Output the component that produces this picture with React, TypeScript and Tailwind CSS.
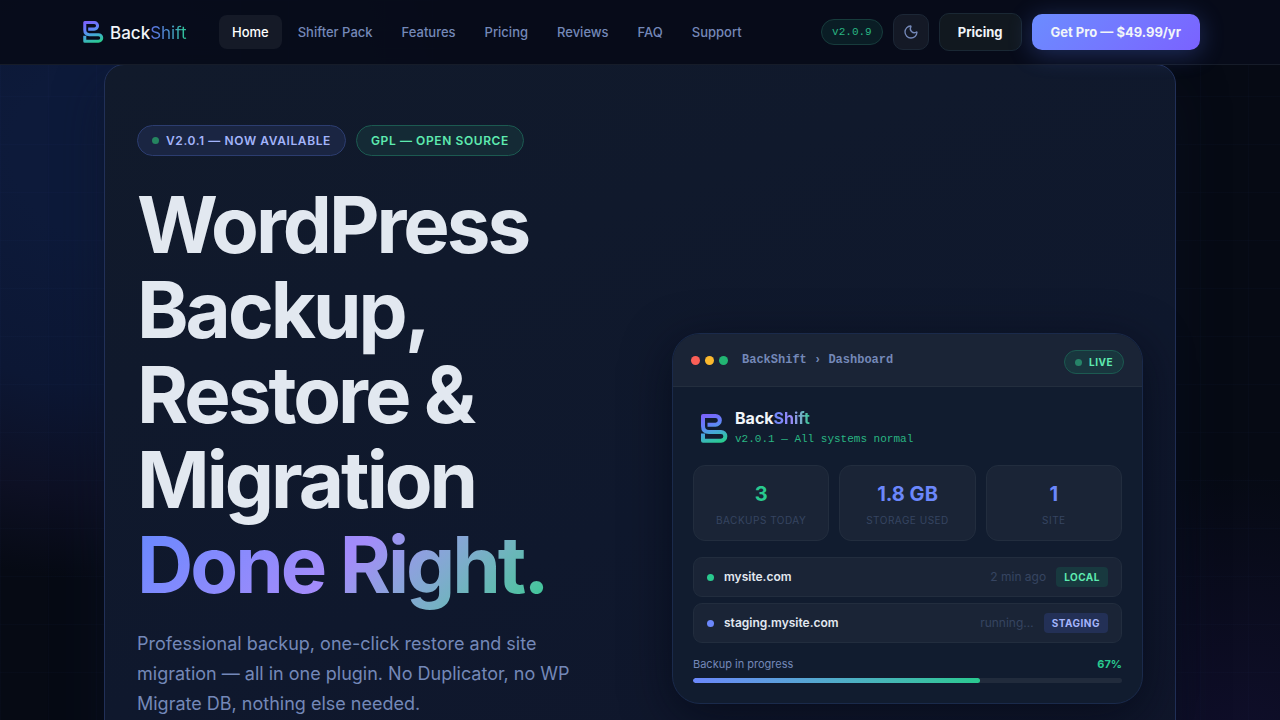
import { useId } from "react";
import { Moon } from "lucide-react";
import clsx from "clsx";

const NAV_LINKS = [
  "Home",
  "Shifter Pack",
  "Features",
  "Pricing",
  "Reviews",
  "FAQ",
  "Support",
];

const STATS = [
  { value: "3", label: "Backups today", color: "text-[#29c98f]" },
  { value: "1.8 GB", label: "Storage used", color: "text-[#6b87fb]" },
  { value: "1", label: "Site", color: "text-[#6b87fb]" },
];

const SITES = [
  {
    name: "mysite.com",
    status: "2 min ago",
    tag: "LOCAL",
    dot: "bg-[#29c98f]",
    tagStyle: "bg-[#18393f] text-[#5eeab0]",
  },
  {
    name: "staging.mysite.com",
    status: "running…",
    tag: "STAGING",
    dot: "bg-[#6b87fb]",
    tagStyle: "bg-[#233056] text-[#a3b4fb]",
  },
];

function LogoMark({ className }: { className?: string }) {
  const id = useId();

  return (
    <svg viewBox="0 0 27 29" fill="none" className={className} aria-hidden="true">
      <defs>
        <linearGradient id={id} x1="6" y1="0" x2="16" y2="29" gradientUnits="userSpaceOnUse">
          <stop stopColor="#7a62fa" />
          <stop offset="0.35" stopColor="#6580fa" />
          <stop offset="0.6" stopColor="#48a5dc" />
          <stop offset="1" stopColor="#29cb90" />
        </linearGradient>
      </defs>
      <path
        d="M6.5 10.7H14.5A4.35 4.35 0 0 0 14.5 2H2V12Q2 18 8 18H20A4.35 4.35 0 0 1 20 26.7H2V19.5"
        stroke={`url(#${id})`}
        strokeWidth="4"
        strokeLinejoin="round"
      />
    </svg>
  );
}

function Header() {
  return (
    <header className="relative z-10 border-b border-[#161c29] bg-[#070c19]/95">
      <div className="mx-auto flex h-16 max-w-[1120px] items-center">
        <a href="#" className="flex w-[139px] shrink-0 items-center gap-1.5 pl-[3px]">
          <LogoMark className="h-[22px] w-[21px]" />
          <span className="pt-[3px] text-[17px] font-medium text-slate-100">
            Back
            <span className="bg-linear-to-r from-[#5b6fe0] via-[#4c8fd0] to-[#29c98f] bg-clip-text font-normal text-transparent">
              Shift
            </span>
          </span>
        </a>
        <nav className="flex gap-[3px]">
          {NAV_LINKS.map((link, i) => (
            <a
              key={link}
              href="#"
              className={clsx(
                "rounded-lg px-[13px] py-[7px] text-[13px] leading-5 font-medium whitespace-nowrap",
                i === 0 ? "bg-[#151a27] text-white" : "text-[#7488b8]"
              )}
            >
              {link}
            </a>
          ))}
        </nav>
        <div className="ml-auto flex shrink-0 items-center gap-2.5">
          <span className="rounded-full border border-[#173c3c] bg-[#0a1d25] px-2.5 font-['Liberation_Mono',monospace] text-[11px] leading-6 text-[#29b582]">
            v2.0.9
          </span>
          <button
            type="button"
            aria-label="Toggle theme"
            className="flex size-9 items-center justify-center rounded-[10px] border border-[#1c2736] bg-[#141926] text-[#7488b8]"
          >
            <Moon className="size-4" />
          </button>
          <button
            type="button"
            className="rounded-[10px] border border-[#1a2834] bg-[#11181f] px-[18px] py-2 text-[13px] leading-5 font-bold text-slate-100"
          >
            Pricing
          </button>
          <button
            type="button"
            className="rounded-[10px] bg-linear-135 from-[#6b8cff] to-[#7a62ff] px-[19px] py-2 text-[13px] leading-5 font-bold whitespace-nowrap text-slate-100 shadow-[0_4px_24px_rgba(91,127,255,0.3)]"
          >
            Get Pro — $49.99/yr
          </button>
        </div>
      </div>
    </header>
  );
}

function Dashboard() {
  return (
    <div className="self-center overflow-hidden rounded-[28px] border border-[#1a2a4b] bg-[#111c2f] shadow-[0_12px_48px_rgba(4,6,18,0.6)]">
      <div className="flex h-[53px] items-center border-b border-[#232e3e] bg-[#1a2436] px-[18px]">
        <div className="flex gap-[5px]">
          <span className="size-[9px] rounded-full bg-[#fb5f57]" />
          <span className="size-[9px] rounded-full bg-[#fbb92e]" />
          <span className="size-[9px] rounded-full bg-[#22b573]" />
        </div>
        <span className="ml-3.5 font-['Liberation_Mono',monospace] text-xs font-bold text-[#7488b8]">
          BackShift › Dashboard
        </span>
        <span className="mt-1 ml-auto flex items-center gap-[7px] rounded-full border border-[#1c5a51] bg-[#19363e] px-2.5 text-[10px] leading-[22px] font-bold tracking-wider text-[#5eeab0]">
          <span className="size-[7px] rounded-full bg-[#268468]" />
          LIVE
        </span>
      </div>

      <div className="p-5">
        <div className="flex items-center gap-[7px] pl-2">
          <LogoMark className="h-[29px] w-[27px]" />
          <div>
            <div className="text-base leading-[22px] font-bold text-slate-100">
              Back
              <span className="bg-linear-to-r from-[#6b87fb] via-[#9a8af8] to-[#29c98f] bg-clip-text text-transparent">
                Shift
              </span>
            </div>
            <div className="font-['Liberation_Mono',monospace] text-[11px] leading-5 text-[#29b582]">
              v2.0.1 — All systems normal
            </div>
          </div>
        </div>

        <div className="mt-4 grid grid-cols-3 gap-2.5">
          {STATS.map((stat) => (
            <div
              key={stat.label}
              className="rounded-xl border border-[#222d3e] bg-[#1a2436] pt-3.5 pb-2 text-center"
            >
              <div className={clsx("text-xl leading-7 font-bold", stat.color)}>{stat.value}</div>
              <div className="text-[10px] leading-6 tracking-wider text-[#364461] uppercase">
                {stat.label}
              </div>
            </div>
          ))}
        </div>

        <div className="mt-4 space-y-1.5">
          {SITES.map((site) => (
            <div
              key={site.name}
              className="flex h-10 items-center rounded-[9px] border border-[#222d3e] bg-[#1a2436] px-[13px]"
            >
              <span className={clsx("size-[7px] rounded-full", site.dot)} />
              <span className="ml-2.5 text-xs font-semibold text-slate-200">{site.name}</span>
              <span className="ml-auto text-xs text-[#364461]">{site.status}</span>
              <span
                className={clsx(
                  "ml-2.5 rounded px-2 text-[10px] leading-5 font-bold tracking-wider",
                  site.tagStyle
                )}
              >
                {site.tag}
              </span>
            </div>
          ))}
        </div>

        <div className="mt-3 flex justify-between text-[11px] leading-[18px]">
          <span className="text-[#7488b8]">Backup in progress</span>
          <span className="font-bold text-[#29c98f]">67%</span>
        </div>
        <div className="mt-[5px] h-[5px] overflow-hidden rounded-full bg-[#212b3c]">
          <div
            className="h-full rounded-full bg-linear-to-r from-[#6b87fb] to-[#29c98f]"
            style={{ width: "67%" }}
          />
        </div>
      </div>
    </div>
  );
}

function Hero() {
  return (
    <section className="mx-auto -mt-px max-w-[1072px] rounded-[20px] border border-[#213058] bg-linear-160 from-[#111a2b] via-[#0f182d] to-[#10152a] px-8 py-[60px] shadow-[0_24px_48px_rgba(12,20,40,0.5)]">
      <div className="grid min-h-[787px] grid-cols-2 gap-16">
        <div>
          <div className="flex gap-2.5 text-xs leading-[29px] font-semibold tracking-wider whitespace-nowrap">
            <span className="flex items-center gap-[7px] rounded-full border border-[#2c3d70] bg-[#1a2542] px-3.5 text-[#a3b4fb]">
              <span className="size-[7px] rounded-full bg-[#258560]" />
              V2.0.1 — NOW AVAILABLE
            </span>
            <span className="rounded-full border border-[#1c5a51] bg-[#142a35] px-3.5 text-[#5eeab0]">
              GPL — OPEN SOURCE
            </span>
          </div>
          <h1 className="mt-[26px] text-[78px] leading-[85px] font-bold tracking-[-3px] text-slate-200">
            WordPress
            <br />
            Backup,
            <br />
            Restore &amp;
            <br />
            Migration
            <br />
            <span className="bg-linear-135 from-[#6488ff] via-[#a38bfa] to-[#29c98f] bg-clip-text whitespace-nowrap text-transparent">
              Done Right.
            </span>
          </h1>
          <p className="mt-[22px] max-w-[440px] text-lg leading-[30px] text-[#7488b8]">
            Professional backup, one-click restore and site migration — all in one plugin. No
            Duplicator, no WP Migrate DB, nothing else needed.
          </p>
        </div>
        <Dashboard />
      </div>
    </section>
  );
}

export default function App() {
  return (
    <div className="relative isolate h-screen overflow-hidden bg-[#060a14] font-['Inter',sans-serif]">
      <div className="absolute inset-0 -z-10 bg-[radial-gradient(ellipse_440px_430px_at_100px_150px,#0d1a3a_20%,#0c1734_55%,#0d1024_80%,transparent_100%),radial-gradient(ellipse_280px_320px_at_97%_110%,#110f2e,transparent)]" />
      <div className="absolute inset-0 -z-10 bg-[linear-gradient(#5078ff05_1px,transparent_1px),linear-gradient(90deg,#5078ff05_1px,transparent_1px)] bg-size-[48px_48px]" />
      <Header />
      <Hero />
    </div>
  );
}
